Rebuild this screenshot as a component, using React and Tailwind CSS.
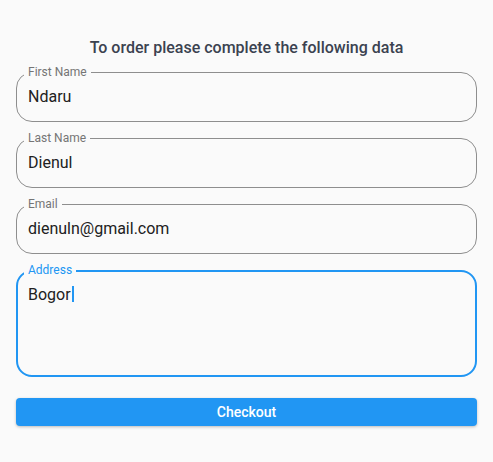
import React from 'react';

const fields = [
  { label: 'First Name', value: 'Ndaru' },
  { label: 'Last Name', value: 'Dienul' },
  { label: 'Email', value: 'dienuln@gmail.com' },
];

const OutlinedField = ({ label, value }) => (
  <div className="relative">
    <div className="h-[50px] rounded-[16px] border border-[#8e8e8e] px-[11px] py-3 text-[16px] leading-6 text-[#212121]">
      {value}
    </div>
    <span className="absolute left-[8px] top-[-6px] bg-[#fafafa] px-[4px] text-[12px] leading-3 text-[#757575]">
      {label}
    </span>
  </div>
);

export default function App() {
  return (
    <div
      className="min-h-[462px] w-full bg-[#fafafa] px-4"
      style={{ fontFamily: 'Roboto, "Noto Sans", sans-serif' }}
    >
      <h1 className="pt-9 text-center text-[16px] font-medium leading-6 text-[#3b4250]">
        To order please complete the following data
      </h1>

      <div className="mt-3 flex flex-col gap-4">
        {fields.map((f) => (
          <OutlinedField key={f.label} label={f.label} value={f.value} />
        ))}

        {/* focused address field */}
        <div className="relative">
          <div className="h-[107px] rounded-[16px] border-2 border-[#2196f3] px-[10px] pt-[11px] text-[16px] leading-6 text-[#212121]">
            <span>Bogor</span>
            <span className="ml-px inline-block h-[16px] w-[2px] translate-y-[2px] bg-[#2196f3]" />
          </div>
          <span className="absolute left-[8px] top-[-6px] bg-[#fafafa] px-[4px] text-[12px] leading-3 text-[#2196f3]">
            Address
          </span>
        </div>
      </div>

      <button className="mt-[21px] flex h-7 w-full items-center justify-center rounded-[4px] bg-[#2196f3] text-[14px] font-medium text-white shadow-[0_1px_3px_rgba(0,0,0,0.25)]">
        Checkout
      </button>
    </div>
  );
}
